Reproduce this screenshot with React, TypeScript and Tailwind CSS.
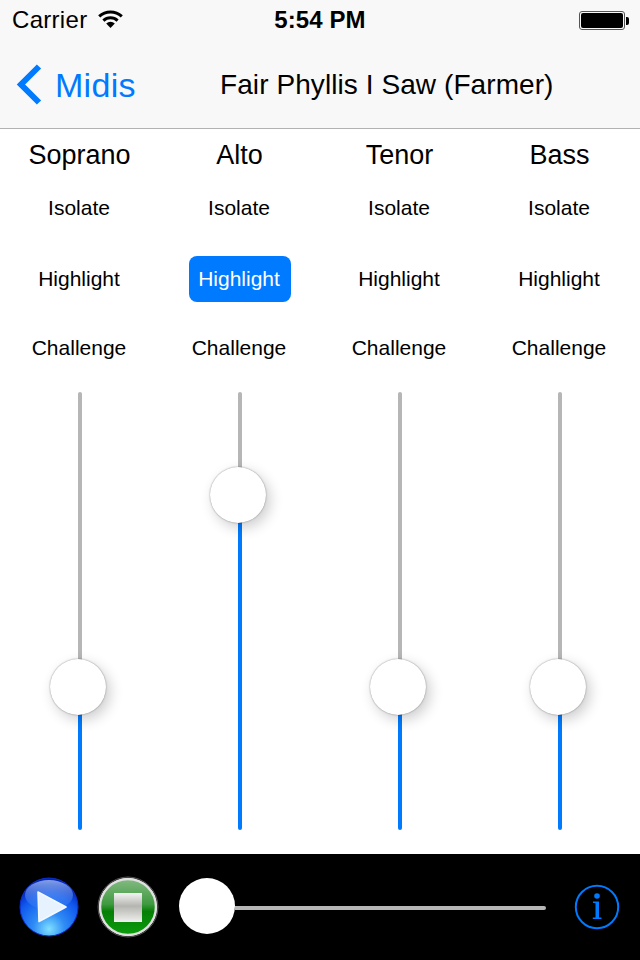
const voices = [
  { name: "Soprano", grey: 295, blue: 143, on: false },
  { name: "Alto", grey: 103, blue: 335, on: true },
  { name: "Tenor", grey: 295, blue: 143, on: false },
  { name: "Bass", grey: 295, blue: 143, on: false },
];

function Wifi() {
  return (
    <svg width="25" height="20" viewBox="0 0 25 20" className="ml-[11px] mb-[3px]">
      <path d="M1.2 7.4 A16.5 16.5 0 0 1 23.8 7.4" fill="none" stroke="#000" strokeWidth="3" />
      <path d="M5.4 11.6 A10.5 10.5 0 0 1 19.6 11.6" fill="none" stroke="#000" strokeWidth="3" />
      <path d="M12.5 19 L8.2 14.6 A6 6 0 0 1 16.8 14.6 Z" fill="#000" />
    </svg>
  );
}

function Back() {
  return (
    <svg width="26" height="42" viewBox="0 0 26 42" className="ml-[16px] mr-[13px] shrink-0">
      <path d="M23 2.5 L5 20.5 L23 38.5" fill="none" stroke="#007aff" strokeWidth="6" />
    </svg>
  );
}

function Battery() {
  return (
    <div className="flex items-center">
      <div className="w-[46px] h-[19px] rounded-[3px] border border-[#555] p-px">
        <div className="w-full h-full bg-black rounded-[2px]" />
      </div>
      <div className="w-[3px] h-[8px] bg-black rounded-r-[2px] ml-px" />
    </div>
  );
}

function PlayIcon() {
  return (
    <svg width="60" height="60" viewBox="0 0 60 60">
      <defs>
        <radialGradient id="playBg" cx="50%" cy="88%" r="78%">
          <stop offset="0%" stopColor="#7fe0ff" />
          <stop offset="35%" stopColor="#2f8cf5" />
          <stop offset="75%" stopColor="#1058ee" />
          <stop offset="100%" stopColor="#0424b8" />
        </radialGradient>
        <linearGradient id="playShine" x1="0" y1="0" x2="0" y2="1">
          <stop offset="0%" stopColor="#b8d4fb" stopOpacity="0.7" />
          <stop offset="100%" stopColor="#5a9cf5" stopOpacity="0.1" />
        </linearGradient>
      </defs>
      <circle cx="30" cy="30" r="29" fill="url(#playBg)" stroke="#0a2fd0" strokeWidth="1" />
      <ellipse cx="30" cy="18" rx="24" ry="15" fill="url(#playShine)" />
      <path d="M19 15 L47 30 L20 44.5 Z" fill="#e6f2fe" stroke="#f4f9ff" strokeWidth="1.6" strokeLinejoin="round" />
    </svg>
  );
}

function StopIcon() {
  return (
    <svg width="62" height="62" viewBox="0 0 62 62">
      <defs>
        <linearGradient id="stopBg" x1="0" y1="0" x2="0" y2="1">
          <stop offset="0%" stopColor="#84ba84" />
          <stop offset="45%" stopColor="#3f9a3f" />
          <stop offset="58%" stopColor="#057f05" />
          <stop offset="100%" stopColor="#0c9c0c" />
        </linearGradient>
        <linearGradient id="stopSq" x1="0" y1="0" x2="0" y2="1">
          <stop offset="0%" stopColor="#f4f4f4" />
          <stop offset="45%" stopColor="#b4b4b0" />
          <stop offset="100%" stopColor="#f0f0ee" />
        </linearGradient>
      </defs>
      <circle cx="31" cy="31" r="28" fill="url(#stopBg)" stroke="#e0e0e0" strokeWidth="2.5" />
      <circle cx="31" cy="31" r="30" fill="none" stroke="#555" strokeWidth="1" />
      <rect x="17" y="17" width="28" height="29" fill="url(#stopSq)" />
    </svg>
  );
}

function InfoIcon() {
  return (
    <svg width="46" height="46" viewBox="0 0 46 46">
      <circle cx="23" cy="23" r="21.2" fill="none" stroke="#007aff" strokeWidth="2" />
      <circle cx="23" cy="12" r="2.8" fill="#007aff" />
      <path d="M19 17.5 H25 V33.5 H27.5 V35 H18.8 V33.5 H21.5 V19 H19 Z" fill="#007aff" />
    </svg>
  );
}

export default function App() {
  return (
    <div className="w-[640px] h-[960px] bg-white flex flex-col overflow-hidden font-['Liberation_Sans',sans-serif] text-black">
      {/* STATUS + NAV */}
      <header className="h-[129px] shrink-0 bg-[#f8f8f8] border-b border-[#b2b2b2] flex flex-col">
        <div className="h-[40px] px-3 relative flex items-center justify-between">
          <div className="flex items-center text-[24px] tracking-[0.3px]">
            Carrier
            <Wifi />
          </div>
          <div className="absolute inset-x-0 text-center text-[24px] font-bold tracking-[0.1px]">5:54 PM</div>
          <div className="mr-[-1px] mt-px"><Battery /></div>
        </div>
        <div className="flex-1 flex items-center pt-[2px]">
          <div className="flex items-center w-[220px] text-[#007aff] text-[34px] tracking-[0.3px]">
            <Back />
            Midis
          </div>
          <div className="text-[28px] whitespace-nowrap tracking-[0.08px]">Fair Phyllis I Saw (Farmer)</div>
        </div>
      </header>

      {/* VOICES */}
      <main className="flex-1 grid grid-cols-4">
        {voices.map((v) => (
          <section key={v.name} className="flex flex-col items-center">
            <div className="h-[50px] pt-[2px] pr-[1px] flex items-center text-[27px]">{v.name}</div>
            <div className="h-[58px] pr-[2px] flex items-center text-[21px]">Isolate</div>
            <div className="h-[46px] mt-[19px] flex items-center">
              <div className={v.on ? "w-[102px] h-[46px] pr-[2px] flex items-center justify-center rounded-[8px] bg-[#007aff] text-white text-[21px]" : "w-[102px] h-[46px] pr-[2px] flex items-center justify-center text-[21px]"}>
                Highlight
              </div>
            </div>
            <div className="h-[46px] mt-[23px] pr-[2px] flex items-center text-[21px]">Challenge</div>
            {/* SLIDER */}
            <div className="relative w-[4px] mt-[21px] flex flex-col">
              <div className="w-full bg-[#b6b6b6] rounded-t-[2px]" style={{ height: v.grey }} />
              <div className="w-full bg-[#007aff] rounded-b-[2px]" style={{ height: v.blue }} />
              <div
                className="absolute left-[-28px] w-[56px] h-[56px] rounded-full bg-white shadow-[4px_5px_14px_rgba(0,0,0,0.2),0_0_1.5px_rgba(0,0,0,0.5)]"
                style={{ top: v.grey - 28 }}
              />
            </div>
          </section>
        ))}
      </main>

      {/* PLAYER BAR */}
      <footer className="h-[106px] shrink-0 bg-black flex items-center">
        <div className="ml-[19px] flex"><PlayIcon /></div>
        <div className="ml-[18px] flex"><StopIcon /></div>
        <div className="ml-[20px] mb-[2px] flex items-center w-[367px]">
          <div className="w-[56px] h-[56px] rounded-full bg-white shrink-0" />
          <div className="flex-1 h-[4px] mt-[4px] bg-[#b6b6b6] rounded-r-[2px]" />
        </div>
        <div className="ml-[28px] flex"><InfoIcon /></div>
      </footer>
    </div>
  );
}
